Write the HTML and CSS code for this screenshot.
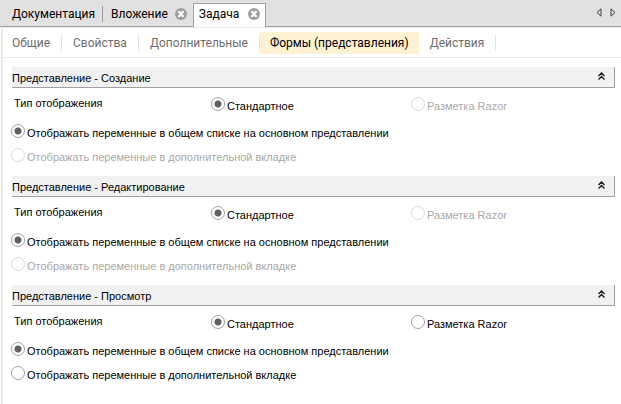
FILE: index.html
```
<!DOCTYPE html>
<html lang="ru">
<head>
  <meta charset="UTF-8">
  <meta name="viewport" content="width=device-width, initial-scale=1.0">
  <title>Задача</title>
  <link rel="stylesheet" href="styles.css">
</head>
<body>

  <!-- Main tabs -->
  <div class="tab-bar">
    <div class="tab tab-first"><button class="tab-title">Документация</button></div>
    <div class="tab">
      <button class="tab-title">Вложение</button>
      <button class="close" aria-label="Закрыть">
        <svg width="12" height="12" viewBox="0 0 12 12"><circle cx="6" cy="6" r="6" fill="#a0a0a0"/><path d="M3 3h2l1 1.500L7 3h2v1L7.500 6 9 8v1H7L6 7.500 5 9H3V8l1.500-2L3 4z" fill="#fff"/></svg>
      </button>
    </div>
    <div class="tab tab-active">
      <button class="tab-title">Задача</button>
      <button class="close" aria-label="Закрыть">
        <svg width="12" height="12" viewBox="0 0 12 12"><circle cx="6" cy="6" r="6" fill="#a0a0a0"/><path d="M3 3h2l1 1.500L7 3h2v1L7.500 6 9 8v1H7L6 7.500 5 9H3V8l1.500-2L3 4z" fill="#fff"/></svg>
      </button>
    </div>
    <div class="scroll">
      <button aria-label="Назад"><svg width="6" height="9" viewBox="0 0 6 9"><path d="M5 .8v7.400L1 4.500z" fill="none" stroke="#404040"/></svg></button>
      <button aria-label="Вперёд"><svg width="6" height="9" viewBox="0 0 6 9"><path d="M1 .8v7.400L5 4.500z" fill="none" stroke="#404040"/></svg></button>
    </div>
  </div>

  <div class="page">
    <!-- Inner tabs -->
    <div class="subtabs">
      <button class="subtab">Общие</button>
      <button class="subtab">Свойства</button>
      <button class="subtab">Дополнительные</button>
      <button class="subtab subtab-active">Формы (представления)</button>
      <button class="subtab">Действия</button>
    </div>

    <div class="sections">
      <!-- Create view -->
      <section>
        <div class="section-header">
          <h2>Представление - Создание</h2>
          <button class="collapse" aria-label="Свернуть"><svg width="7" height="8" viewBox="0 0 7 8"><path d="M.5 4l3-3 3 3M.5 7.500l3-3 3 3" fill="none" stroke="#222" stroke-width="1.500"/></svg></button>
        </div>
        <div class="type-row">
          <span class="type-label">Тип отображения</span>
          <label><input type="radio" name="create-type" checked>Стандартное</label>
          <label class="disabled"><input type="radio" name="create-type" disabled>Разметка Razor</label>
        </div>
        <div class="options">
          <label><input type="radio" name="create-vars" checked>Отображать переменные в общем списке на основном представлении</label>
          <label class="disabled"><input type="radio" name="create-vars" disabled>Отображать переменные в дополнительной вкладке</label>
        </div>
      </section>

      <!-- Edit view -->
      <section>
        <div class="section-header">
          <h2>Представление - Редактирование</h2>
          <button class="collapse" aria-label="Свернуть"><svg width="7" height="8" viewBox="0 0 7 8"><path d="M.5 4l3-3 3 3M.5 7.500l3-3 3 3" fill="none" stroke="#222" stroke-width="1.500"/></svg></button>
        </div>
        <div class="type-row">
          <span class="type-label">Тип отображения</span>
          <label><input type="radio" name="edit-type" checked>Стандартное</label>
          <label class="disabled"><input type="radio" name="edit-type" disabled>Разметка Razor</label>
        </div>
        <div class="options">
          <label><input type="radio" name="edit-vars" checked>Отображать переменные в общем списке на основном представлении</label>
          <label class="disabled"><input type="radio" name="edit-vars" disabled>Отображать переменные в дополнительной вкладке</label>
        </div>
      </section>

      <!-- Read view -->
      <section>
        <div class="section-header">
          <h2>Представление - Просмотр</h2>
          <button class="collapse" aria-label="Свернуть"><svg width="7" height="8" viewBox="0 0 7 8"><path d="M.5 4l3-3 3 3M.5 7.500l3-3 3 3" fill="none" stroke="#222" stroke-width="1.500"/></svg></button>
        </div>
        <div class="type-row">
          <span class="type-label">Тип отображения</span>
          <label><input type="radio" name="view-type" checked>Стандартное</label>
          <label><input type="radio" name="view-type">Разметка Razor</label>
        </div>
        <div class="options">
          <label><input type="radio" name="view-vars" checked>Отображать переменные в общем списке на основном представлении</label>
          <label><input type="radio" name="view-vars">Отображать переменные в дополнительной вкладке</label>
        </div>
      </section>
    </div>
  </div>

</body>
</html>
```

FILE: styles.css
```
* {
  box-sizing: border-box;
}

body {
  margin: 0;
  background-color: #ffffff;
  color: #000000;
  font-family: "Liberation Sans", Arial, sans-serif;
  font-size: 11px;
  min-height: 100vh;
  display: flex;
  flex-direction: column;
}

button {
  border: none;
  padding: 0;
  background: none;
  color: inherit;
  font-family: Roboto, sans-serif;
  font-size: 12px;
  cursor: pointer;
}

svg {
  display: block;
}

.tab-bar {
  display: flex;
  align-items: flex-end;
  height: 27px;
  padding-left: 1px;
  background-color: #e1e1e1;
  box-shadow: inset 0 -1px #a0a0a0;
}

.tab {
  display: flex;
  align-items: center;
  gap: 7px;
  height: 24px;
  padding: 0 6px 3px 8px;
}

.tab-first {
  padding: 0 0 3px 11px;
}

.tab-first::after {
  content: "";
  width: 1px;
  height: 16px;
  background-color: #a0a0a0;
}

.tab-active {
  gap: 9px;
  padding: 0 5px 3px 5px;
  border: 1px solid #a0a0a0;
  border-bottom: none;
  background-color: #ffffff;
}

.scroll {
  display: flex;
  align-items: center;
  gap: 8px;
  height: 24px;
  margin-left: auto;
  padding: 0 5px 5px 0;
}

.page {
  flex: 1;
  margin-left: 1px;
  border-left: 2px solid #ebebeb;
  border-top: 1px solid #ebebeb;
}

.subtabs {
  display: flex;
  align-items: center;
  height: 30px;
  padding-top: 1px;
  border-bottom: 1px solid #ebebeb;
}

.subtab {
  display: flex;
  align-items: center;
  height: 22px;
  padding-left: 11px;
  color: #6e6e6e;
}

.subtab:first-child {
  padding-left: 9px;
}

.subtab::after {
  content: "";
  width: 1px;
  height: 16px;
  margin-left: 11px;
  background-color: #e1e1e1;
}

.subtab-active {
  padding: 0 10px;
  background-color: #fff2d2;
  color: #000000;
}

.subtab-active::after {
  content: none;
}

.sections {
  display: flex;
  flex-direction: column;
  gap: 8px;
  padding: 9px 6px 10px 8px;
}

.section-header {
  display: flex;
  align-items: center;
  justify-content: space-between;
  height: 21px;
  margin-left: 1px;
  padding-right: 9px;
  border-right: 1px solid #a0a0a0;
  border-bottom: 1px solid #a0a0a0;
  background-color: #f1f1f1;
}

h2 {
  margin: 0;
  padding-top: 2px;
  font-size: 11px;
  font-weight: normal;
}

.collapse {
  padding-bottom: 2px;
}

.type-row {
  display: grid;
  grid-template-columns: 1fr 1fr 1fr;
  height: 32px;
  padding: 2px 4px 0 0;
  align-items: center;
}

.type-label {
  padding: 0 0 4px 3px;
}

label {
  display: flex;
  align-items: center;
  gap: 2px;
  height: 24px;
  padding-top: 2px;
}

.disabled {
  color: #a8a8a8;
}

input[type="radio"] {
  appearance: none;
  width: 14px;
  height: 14px;
  margin: 0 0 4px 0;
  border: 1px solid #a0a0a0;
  border-radius: 50%;
  background-color: #ffffff;
}

input[type="radio"]:checked {
  background-image: radial-gradient(circle, #606060 3px, transparent 4px);
}

input[type="radio"]:disabled {
  border-color: #dcdcdc;
}

.options {
  display: flex;
  flex-direction: column;
}
```
